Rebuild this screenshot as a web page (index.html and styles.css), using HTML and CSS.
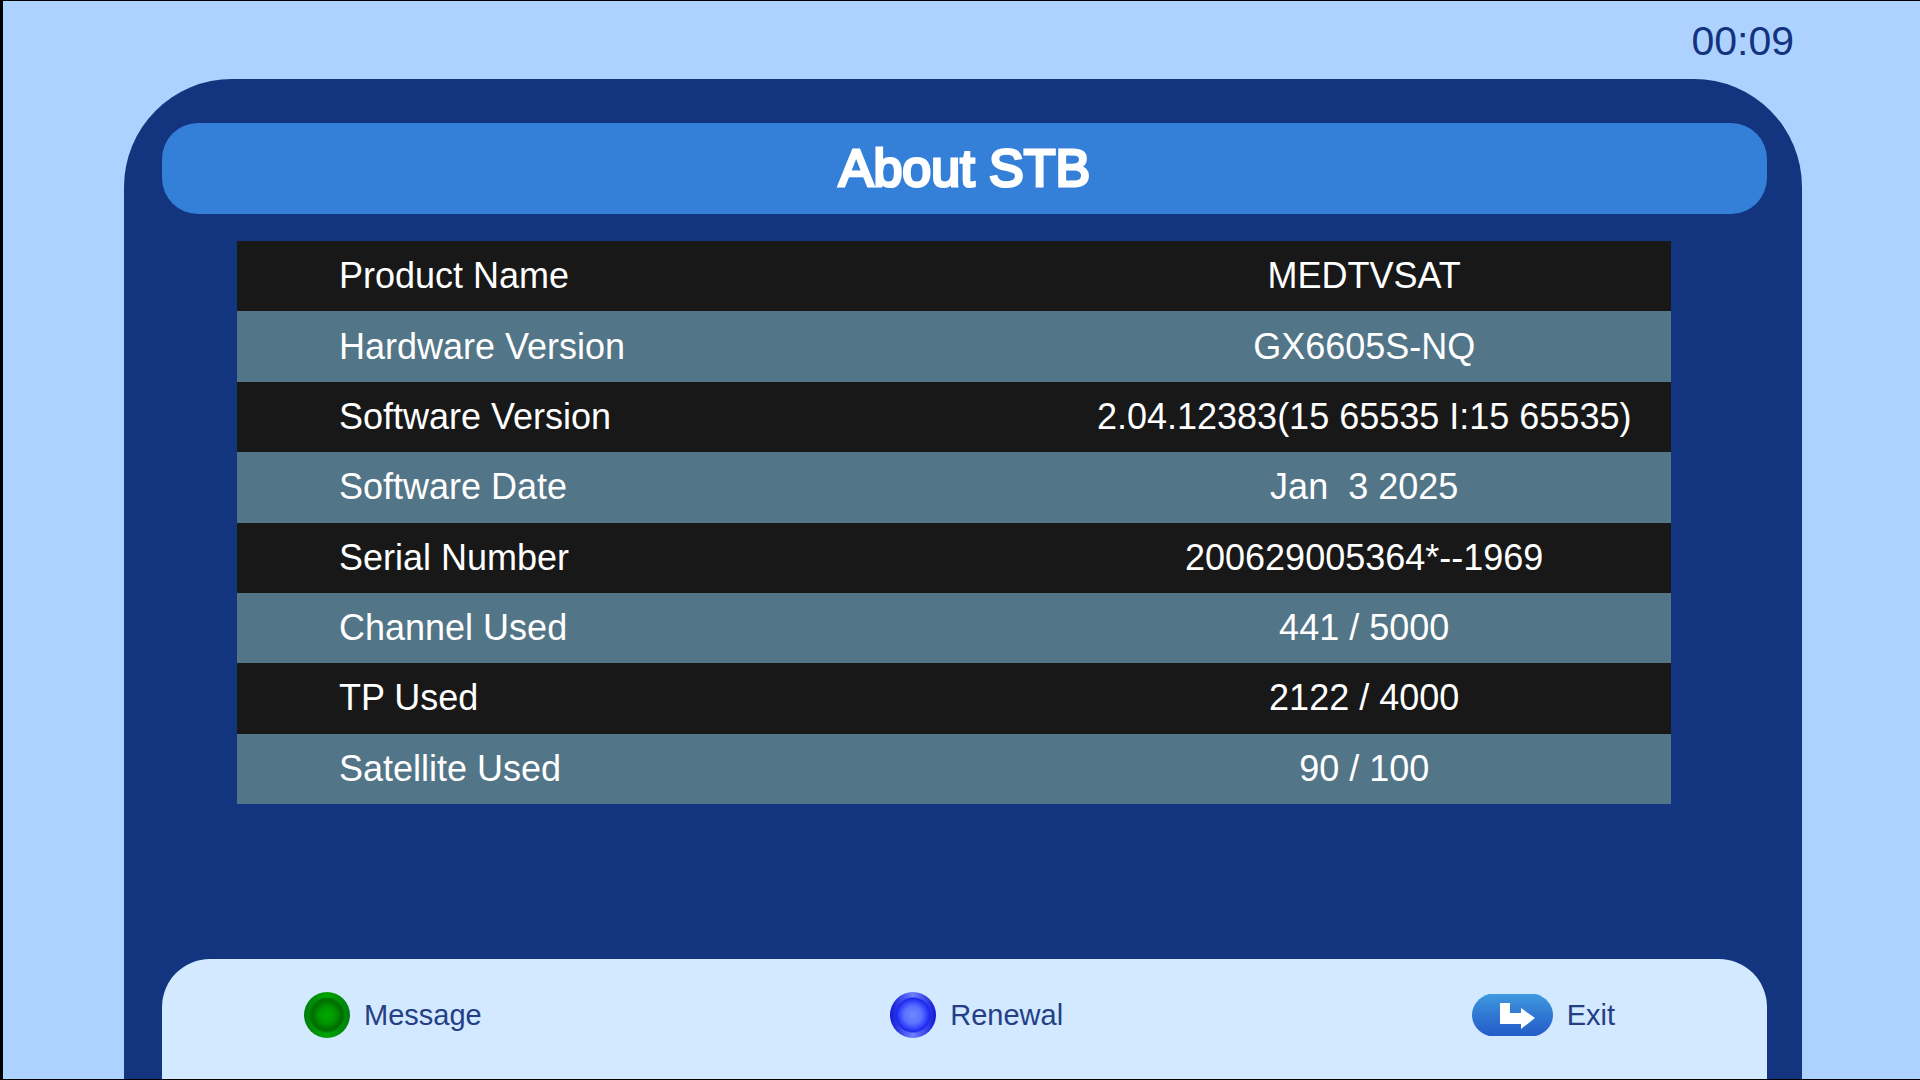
FILE: index.html
```
<!DOCTYPE html>
<html lang="en">
  <head>
    <meta charset="UTF-8" />
    <meta name="viewport" content="width=device-width, initial-scale=1.0" />
    <title>About STB</title>
    <link rel="stylesheet" href="styles.css">
  </head>
  <body>
    <header class="top-bar">
      <time class="clock">00:09</time>
    </header>

    <main class="panel">
      <h1 class="panel-title">About STB</h1>

      <table class="info-table">
        <tbody>
          <tr>
            <th scope="row">Product Name</th>
            <td>MEDTVSAT</td>
          </tr>
          <tr>
            <th scope="row">Hardware Version</th>
            <td>GX6605S-NQ</td>
          </tr>
          <tr>
            <th scope="row">Software Version</th>
            <td>2.04.12383(15 65535 I:15 65535)</td>
          </tr>
          <tr>
            <th scope="row">Software Date</th>
            <td>Jan  3 2025</td>
          </tr>
          <tr>
            <th scope="row">Serial Number</th>
            <td>200629005364*--1969</td>
          </tr>
          <tr>
            <th scope="row">Channel Used</th>
            <td>441 / 5000</td>
          </tr>
          <tr>
            <th scope="row">TP Used</th>
            <td>2122 / 4000</td>
          </tr>
          <tr>
            <th scope="row">Satellite Used</th>
            <td>90 / 100</td>
          </tr>
        </tbody>
      </table>

      <footer class="key-bar">
        <button class="key" type="button">
          <span class="dot dot-green"></span>
          Message
        </button>
        <button class="key" type="button">
          <span class="dot dot-blue"></span>
          Renewal
        </button>
        <button class="key" type="button">
          <svg class="exit-icon" viewBox="0 0 81 42" aria-hidden="true">
            <defs>
              <linearGradient id="pill" x1="0" y1="0" x2="0" y2="1">
                <stop offset="0" stop-color="#409ade" />
                <stop offset="0.5" stop-color="#3078d2" />
                <stop offset="1" stop-color="#235cc8" />
              </linearGradient>
            </defs>
            <path d="M17 0H64C74 3 81 11 81 21S74 39 64 42H17C7 39 0 31 0 21S7 3 17 0Z" fill="url(#pill)" />
            <path d="M28 9H38V19H49V14L63 24L49 35V30H28Z" fill="#fff" />
          </svg>
          Exit
        </button>
      </footer>
    </main>
  </body>
</html>
```

FILE: styles.css
```
* {
  box-sizing: border-box;
}

body {
  margin: 0;
  min-height: 100vh;
  display: flex;
  flex-direction: column;
  background-color: #aed2ff;
  border: 1px solid #000;
  border-left-width: 3px;
  border-right: 0;
  font-family: "Liberation Sans", Arial, sans-serif;
}

.top-bar {
  display: flex;
  justify-content: flex-end;
  padding: 17px 126px 15px;
}

.clock {
  font-size: 41px;
  line-height: 46px;
  color: #14337f;
}

.panel {
  flex: 1;
  display: flex;
  flex-direction: column;
  margin: 0 118px 0 121px;
  padding: 44px 35px 0 38px;
  background-color: #13347f;
  border-radius: 108px 108px 0 0;
}

.panel-title {
  margin: 0;
  padding: 15px 0 16px;
  border-radius: 36px;
  background-color: #347fd8;
  color: #fff;
  font-size: 52px;
  font-weight: normal;
  line-height: 60px;
  text-align: center;
  -webkit-text-stroke: 3px #fff;
}

.info-table {
  height: 563px;
  margin: 27px 96px 60px 75px;
  border-collapse: collapse;
  table-layout: fixed;
  color: #fff;
  font-size: 36px;
  line-height: 40px;
}

.info-table tr {
  background-color: #181818;
}

.info-table tr:nth-child(even) {
  background-color: #527587;
}

.info-table th {
  width: 57%;
  padding: 0 0 0 102px;
  font-weight: normal;
  text-align: left;
}

.info-table td {
  padding: 0 0 0 3px;
  text-align: center;
  white-space: pre;
}

.key-bar {
  display: flex;
  justify-content: space-between;
  margin-top: auto;
  padding: 33px 152px 41px 142px;
  border-radius: 48px 48px 0 0;
  background-color: #d2e9ff;
}

.key {
  display: flex;
  align-items: center;
  gap: 14px;
  height: 46px;
  padding: 0;
  border: 0;
  background: none;
  color: #253f85;
  font-family: inherit;
  font-size: 29px;
  cursor: pointer;
}

.dot {
  width: 46px;
  height: 46px;
  border-radius: 50%;
}

/* glossy centre, dark ring, then a rim lit from top and bottom */
.dot-green {
  background:
    radial-gradient(closest-side, #00a800 0, #009600 35%, #007000 62%, #007000 70%, transparent 78%),
    linear-gradient(90deg, #007f10, #00a400 50%, #007f10);
}

.dot-blue {
  background:
    radial-gradient(closest-side, #7088ff 0, #5c70ff 38%, #3040fa 62%, #1c28ee 72%, transparent 80%),
    linear-gradient(90deg, #1018d8, #6f80ff 50%, #1018d8);
}

.exit-icon {
  width: 81px;
  height: 42px;
}
```
